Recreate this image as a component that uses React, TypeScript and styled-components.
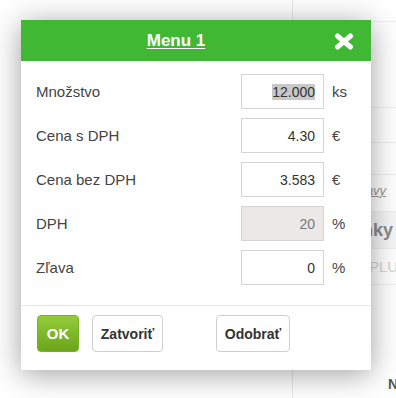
import React from 'react'
import styled, {createGlobalStyle} from 'styled-components'

const GlobalStyle = createGlobalStyle`
  html, body {
    margin: 0;
    padding: 0;
    background: #fff;
    font-family: "Liberation Sans", Arial, sans-serif;
  }
`

const Page = styled.div`
  position: relative;
  width: 396px;
  height: 398px;
  overflow: hidden;
  display: grid;
  grid-template-columns: 292px 1fr;
`

const Sidebar = styled.div`
  border-left: 1px solid #e8e8e8;
  display: flex;
  flex-direction: column;
`

const SideRow = styled.div<{h: number; pr: number; pb?: number; shade?: boolean}>`
  box-sizing: border-box;
  height: ${p => p.h}px;
  border-bottom: 1px solid #efefef;
  background: ${p => (p.shade ? '#f6f6f6' : '#fff')};
  display: flex;
  align-items: center;
  justify-content: flex-end;
  padding-right: ${p => p.pr}px;
  padding-bottom: ${p => p.pb || 0}px;
  white-space: nowrap;
  overflow: hidden;
`

const SideLink = styled.span`
  font-size: 13px;
  color: #999;
  text-decoration: underline;
  font-style: italic;
`

const SideBold = styled.span`
  font-size: 18px;
  font-weight: bold;
  color: #8a8a8a;
`

const SideLight = styled.span`
  font-size: 15px;
  color: #d6d6d6;
`

const SideFoot = styled.div`
  flex: 1;
  display: flex;
  align-items: flex-end;
  padding: 0 0 6px 95px;
  font-size: 14px;
  font-weight: bold;
  color: #555;
`

const Dialog = styled.div`
  position: absolute;
  left: 21px;
  top: 20px;
  width: 350px;
  height: 350px;
  background: #fff;
  box-shadow: 0 4px 28px rgba(0, 0, 0, 0.38);
  display: flex;
  flex-direction: column;
`

const Header = styled.div`
  height: 41px;
  background: #41b833;
  display: flex;
  align-items: center;
  padding-right: 40px;
  position: relative;
`

const Title = styled.a`
  flex: 1;
  text-align: center;
  color: #fff;
  font-size: 17px;
  font-weight: bold;
  text-decoration: underline;
  text-underline-offset: 2px;
`

const Close = styled.svg`
  position: absolute;
  right: 17px;
  top: 13px;
`

const Body = styled.div`
  padding: 13px 0 20px 15px;
  display: flex;
  flex-direction: column;
  gap: 9px;
  border-bottom: 1px solid #e3e3e3;
`

const Row = styled.div`
  display: grid;
  grid-template-columns: 205px 83px auto;
  align-items: center;
  height: 35px;
`

const Label = styled.span`
  font-size: 15px;
  color: #444;
`

const Field = styled.div<{disabled?: boolean}>`
  box-sizing: border-box;
  height: 35px;
  border: 1px solid #d4d4d4;
  background: ${p => (p.disabled ? '#ebe9e5' : '#fff')};
  color: ${p => (p.disabled ? '#777' : '#333')};
  font-size: 14px;
  display: flex;
  align-items: center;
  justify-content: flex-end;
  padding-right: 8px;
`

const Selected = styled.span`
  background: #c8c8c8;
`

const Unit = styled.span`
  font-size: 15px;
  color: #444;
  padding-left: 8px;
`

const Footer = styled.div`
  display: flex;
  align-items: center;
  padding: 9px 0 0 16px;
`

const Button = styled.button<{primary?: boolean; ml: number; w: number}>`
  box-sizing: border-box;
  margin-left: ${p => p.ml}px;
  width: ${p => p.w}px;
  height: 37px;
  border-radius: 4px;
  font-family: "Liberation Sans", Arial, sans-serif;
  font-weight: bold;
  font-size: ${p => (p.primary ? 15 : 14)}px;
  color: ${p => (p.primary ? '#fff' : '#333')};
  border: 1px solid ${p => (p.primary ? '#79b321' : '#cfcfcf')};
  background: ${p => (p.primary ? 'linear-gradient(#93cb3b, #6aa619)' : '#fff')};
  padding: 0;
`

const rows = [
  {label: 'Množstvo', value: '12.000', unit: 'ks', selected: true},
  {label: 'Cena s DPH', value: '4.30', unit: '€'},
  {label: 'Cena bez DPH', value: '3.583', unit: '€'},
  {label: 'DPH', value: '20', unit: '%', disabled: true},
  {label: 'Zľava', value: '0', unit: '%'},
]

export default function App() {
  return (
    <>
      <GlobalStyle />
      <Page>
        <div />
        <Sidebar>
          <SideRow h={22} pr={0} />
          <SideRow h={86} pr={0} />
          <SideRow h={35} pr={0} />
          <SideRow h={32} pr={0} />
          <SideRow h={37} pr={12} pb={6}>
            <SideLink>Úpravy</SideLink>
          </SideRow>
          <SideRow h={37} pr={5} shade>
            <SideBold>Poznámky</SideBold>
          </SideRow>
          <SideRow h={36} pr={0}>
            <SideLight>Uložiť PLU</SideLight>
          </SideRow>
          <SideFoot>N</SideFoot>
        </Sidebar>

        <Dialog>
          <Header>
            <Title>Menu 1</Title>
            <Close width="20" height="17" viewBox="0 0 20 17">
              <path
                d="M3.5 3 L16.5 14 M16.5 3 L3.5 14"
                stroke="#fff"
                strokeWidth="5"
                strokeLinecap="round"
              />
            </Close>
          </Header>
          <Body>
            {rows.map(r => (
              <Row key={r.label}>
                <Label>{r.label}</Label>
                <Field disabled={r.disabled}>
                  {r.selected ? <Selected>{r.value}</Selected> : r.value}
                </Field>
                <Unit>{r.unit}</Unit>
              </Row>
            ))}
          </Body>
          <Footer>
            <Button primary ml={0} w={42}>OK</Button>
            <Button ml={13} w={71}>Zatvoriť</Button>
            <Button ml={53} w={74}>Odobrať</Button>
          </Footer>
        </Dialog>
      </Page>
    </>
  )
}
